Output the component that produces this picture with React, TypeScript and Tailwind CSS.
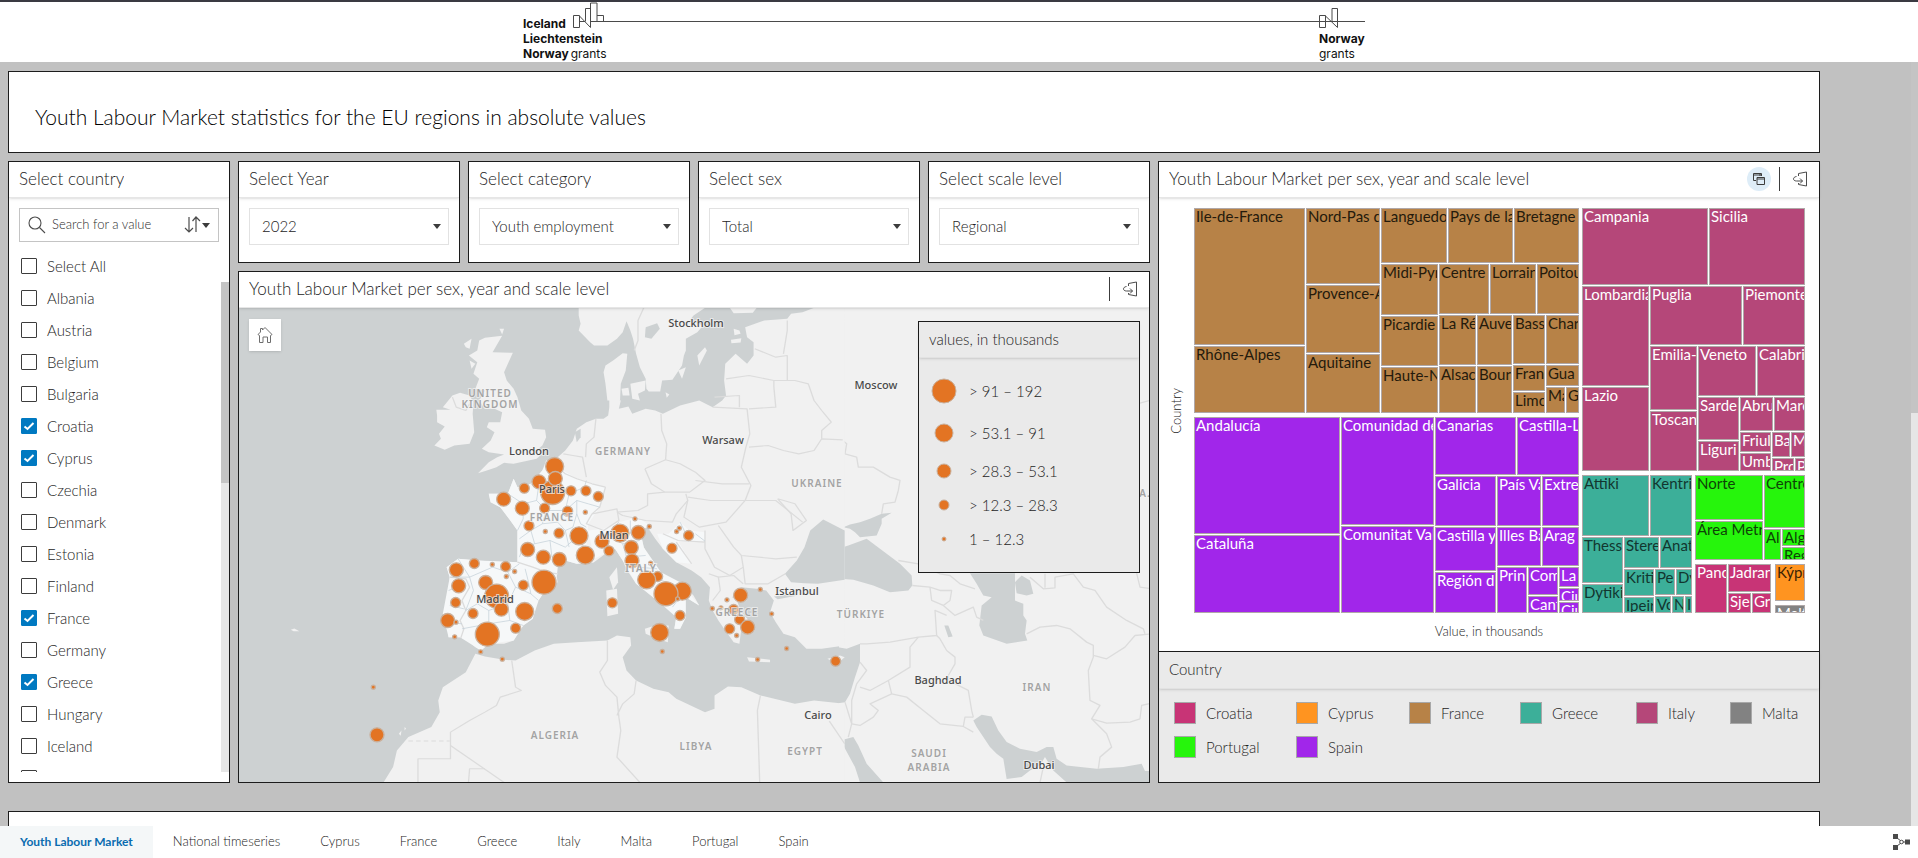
import { useState, type ReactNode } from "react";

type Tile = [name: string, x: number, y: number, w: number, h: number];
interface TileGroup { country: string; fill: string; text: string; tiles: Tile[]; }

const COUNTRIES = ["Albania", "Austria", "Belgium", "Bulgaria", "Croatia", "Cyprus", "Czechia", "Denmark", "Estonia", "Finland", "France", "Germany", "Greece", "Hungary", "Iceland", "Ireland"];
const PRESELECTED = ["Croatia", "Cyprus", "France", "Greece"];
const TABS = ["Youth Labour Market", "National timeseries", "Cyprus", "France", "Greece", "Italy", "Malta", "Portugal", "Spain"];

const FILTERS = [
  { id: "year", title: "Select Year", options: ["2022", "2021", "2020"] },
  { id: "category", title: "Select category", options: ["Youth employment", "Youth unemployment"] },
  { id: "sex", title: "Select sex", options: ["Total", "Females", "Males"] },
  { id: "scale", title: "Select scale level", options: ["Regional", "National"] },
];

const CHART_LEGEND = [
  { name: "Croatia", fill: "#c83476" },
  { name: "Cyprus", fill: "#ff9420" },
  { name: "France", fill: "#b78247" },
  { name: "Greece", fill: "#3caf99" },
  { name: "Italy", fill: "#b54779" },
  { name: "Malta", fill: "#828282" },
  { name: "Portugal", fill: "#26f50c" },
  { name: "Spain", fill: "#a126ea" },
];

// names are cut to what a tile can hold
const TREEMAP: TileGroup[] = [
  {
    country: "France", fill: "#b78247", text: "#241a0c",
    tiles: [
      ["Ile-de-France", 0, 0, 112, 138], ["Rhône-Alpes", 0, 138, 112, 68],
      ["Nord-Pas d", 112, 0, 75, 77], ["Provence-A", 112, 77, 75, 69], ["Aquitaine", 112, 146, 75, 60],
      ["Languedo", 187, 0, 67, 56], ["Pays de la", 254, 0, 66, 56], ["Bretagne", 320, 0, 66, 56],
      ["Midi-Pyr", 187, 56, 58, 52], ["Centre", 245, 56, 51, 51], ["Lorrain", 296, 56, 47, 51], ["Poitou", 343, 56, 43, 51],
      ["Picardie", 187, 108, 58, 51], ["Haute-N", 187, 159, 58, 47],
      ["La Ré", 245, 107, 38, 51], ["Auve", 283, 107, 36, 51], ["Bass", 319, 107, 33, 50], ["Char", 352, 107, 34, 50],
      ["Alsac", 245, 158, 38, 48], ["Bour", 283, 158, 36, 48], ["Fran", 319, 157, 33, 27], ["Limo", 319, 184, 33, 22],
      ["Gua", 352, 157, 34, 22], ["Ma", 352, 179, 20, 27], ["G", 372, 179, 14, 27],
    ],
  },
  {
    country: "Spain", fill: "#a126ea", text: "#ffffff",
    tiles: [
      ["Andalucía", 0, 209, 147, 118], ["Cataluña", 0, 327, 147, 79],
      ["Comunidad de", 147, 209, 94, 109], ["Comunitat Val", 147, 318, 94, 88],
      ["Canarias", 241, 209, 82, 59], ["Castilla-L", 323, 209, 63, 59],
      ["Galicia", 241, 268, 62, 51], ["País Va", 303, 268, 45, 51], ["Extre", 348, 268, 38, 51],
      ["Castilla y", 241, 319, 62, 45], ["Región d", 241, 364, 62, 42],
      ["Illes Ba", 303, 319, 45, 40], ["Arag", 348, 319, 38, 40],
      ["Prin", 303, 359, 31, 47], ["Com", 334, 359, 31, 29], ["Cant", 334, 388, 31, 18],
      ["La", 365, 359, 21, 21], ["Ciu", 365, 380, 21, 14], ["Ciu", 365, 394, 21, 12],
    ],
  },
  {
    country: "Italy", fill: "#b54779", text: "#ffffff",
    tiles: [
      ["Campania", 388, 0, 127, 78], ["Sicilia", 515, 0, 97, 78],
      ["Lombardia", 388, 78, 68, 101], ["Lazio", 388, 179, 68, 85],
      ["Puglia", 456, 78, 93, 60], ["Piemonte", 549, 78, 63, 60],
      ["Emilia-", 456, 138, 48, 65], ["Toscan", 456, 203, 48, 61],
      ["Veneto", 504, 138, 59, 51], ["Calabri", 563, 138, 49, 51],
      ["Sarde", 504, 189, 42, 44], ["Liguri", 504, 233, 42, 31],
      ["Abru", 546, 189, 34, 35], ["Marc", 580, 189, 32, 35],
      ["Friul", 546, 224, 32, 21], ["Umb", 546, 245, 32, 19],
      ["Ba", 578, 224, 19, 26], ["M", 597, 224, 15, 26],
      ["Pro", 578, 250, 23, 14], ["P", 601, 250, 11, 14],
    ],
  },
  {
    country: "Greece", fill: "#3caf99", text: "#12362f",
    tiles: [
      ["Attiki", 388, 267, 68, 62], ["Kentri", 456, 267, 43, 62],
      ["Thess", 388, 329, 42, 47], ["Dytiki", 388, 376, 42, 30],
      ["Stere", 430, 329, 36, 32], ["Anat", 466, 329, 33, 32],
      ["Kriti", 430, 361, 31, 28], ["Pe", 461, 361, 21, 27], ["Dy", 482, 361, 17, 27],
      ["Ipeir", 430, 389, 31, 17], ["Vo", 461, 388, 17, 18], ["N", 478, 388, 13, 18], ["I", 491, 388, 8, 18],
    ],
  },
  {
    country: "Portugal", fill: "#26f50c", text: "#0e4207",
    tiles: [
      ["Norte", 501, 267, 69, 46], ["Área Metr", 501, 313, 69, 40],
      ["Centro", 570, 267, 42, 54], ["Al", 570, 321, 18, 32], ["Alg", 588, 321, 24, 18], ["Reg", 588, 339, 24, 14],
    ],
  },
  {
    country: "Croatia", fill: "#c83476", text: "#ffffff",
    tiles: [["Pano", 501, 356, 33, 50], ["Jadran", 534, 356, 44, 29], ["Sje", 534, 385, 24, 21], ["Gr", 558, 385, 20, 21]],
  },
  { country: "Cyprus", fill: "#ff9420", text: "#3a2204", tiles: [["Kýpr", 581, 356, 31, 38]] },
  { country: "Malta", fill: "#828282", text: "#ffffff", tiles: [["Malt", 581, 397, 31, 9]] },
];

// marker radius per class, smallest class last
const RADII = [12, 9, 7, 5, 2];
const MARKERS: [x: number, y: number, cls: number][] = [
  [464, 138, 1], [417, 184, 2], [458, 216, 0], [466, 174, 2], [373, 203, 3], [513, 211, 3], [558, 211, 3], [595, 228, 3],
  [311, 236, 2], [367, 263, 2], [434, 263, 3], [503, 272, 3], [556, 275, 4], [387, 316, 3], [436, 333, 4], [477, 338, 3],
  [537, 346, 1], [383, 387, 2], [430, 410, 2], [478, 417, 2], [556, 404, 1], [606, 362, 2], [627, 391, 3], [660, 338, 1],
  [715, 336, 2], [705, 295, 4], [748, 318, 4], [694, 381, 2], [696, 421, 2], [838, 323, 4], [830, 333, 4], [866, 345, 3],
  [816, 383, 3], [773, 468, 3], [740, 478, 1], [752, 428, 4], [847, 512, 1], [798, 520, 0], [833, 535, 4], [840, 585, 3],
  [637, 547, 3], [779, 636, 1], [787, 693, 4], [432, 485, 0], [370, 494, 3], [169, 448, 2], [223, 429, 3], [277, 432, 4],
  [317, 438, 3], [344, 453, 4], [319, 468, 4], [176, 496, 2], [257, 486, 2], [290, 527, 0], [304, 566, 2], [374, 573, 1],
  [347, 623, 3], [472, 564, 3], [219, 579, 3], [167, 546, 3], [143, 600, 2], [168, 605, 4], [164, 649, 4], [262, 641, 0],
  [242, 694, 4], [307, 716, 4], [1022, 524, 2], [1081, 507, 4], [981, 538, 4], [937, 564, 4], [963, 562, 4], [1001, 567, 3],
  [1019, 597, 3], [1043, 620, 2], [989, 625, 3], [1010, 645, 4], [1115, 580, 4], [1160, 684, 4], [1073, 717, 4], [1307, 722, 3],
  [-80, 800, 4], [-69, 943, 2],
];

const CITY_LABELS: [string, number, number][] = [
  ["Stockholm", 696, 326], ["Moscow", 876, 388], ["London", 529, 454], ["Warsaw", 723, 443], ["Paris", 552, 492], ["Milan", 614, 538],
  ["Madrid", 495, 602], ["Istanbul", 797, 594], ["Baghdad", 938, 683], ["Dubai", 1039, 768], ["Cairo", 818, 718],
];
const COUNTRY_LABELS: [string, number, number][] = [
  ["UNITED", 490, 396], ["KINGDOM", 490, 407], ["GERMANY", 623, 454], ["UKRAINE", 817, 486], ["FRANCE", 552, 520], ["ITALY", 641, 571],
  ["GREECE", 737, 615], ["TÜRKIYE", 861, 617], ["IRAN", 1037, 690], ["ALGERIA", 555, 738], ["LIBYA", 696, 749], ["EGYPT", 805, 754],
  ["SAUDI", 929, 756], ["ARABIA", 929, 770], ["A.", 1145, 496],
];

const MAP_LEGEND = [
  { label: "> 91 – 192", r: 12, row: "h-[42px]" },
  { label: "> 53.1 – 91", r: 9, row: "h-[42px]" },
  { label: "> 28.3 – 53.1", r: 7, row: "h-[34px]" },
  { label: "> 12.3 – 28.3", r: 5, row: "h-[34px]" },
  { label: "1 – 12.3", r: 2, row: "h-[34px]" },
];

// west sheet of the basemap
const WEST_LAND = [
  "640,112 685,106 660,155 713,157 690,215 697,240 715,265 725,290 735,330 755,355 765,385 797,388 800,410 790,435 780,445 790,460 775,475 745,482 715,490 690,487 670,500 645,510 622,518 650,485 672,470 690,462 650,455 632,445 655,420 665,395 645,380 650,365 680,365 685,335 665,325 640,325 625,300 640,270 615,265 625,235 610,220 620,185 598,165 620,150 625,120",
  "585,130 605,115 600,145 590,140", "678,85 690,85 685,102", "600,180 615,190 605,205",
  "513,328 550,328 530,320 555,285 575,277 600,285 610,305 608,340 612,395 600,430 560,435 535,448 508,435 525,415 520,400 535,378 515,365 515,345",
  "885,22 885,45 890,70 885,90 915,125 925,135 960,135 985,115 1000,95 1010,62 1020,90 1027,115 1035,160 1045,200 1060,235 1062,265 1068,273 1098,273 1103,240 1130,238 1155,195 1160,165 1165,150 1165,115 1195,95 1210,75 1175,60 1185,45 1215,22",
  "1195,165 1215,140 1220,150 1200,195", "1145,210 1165,200 1155,235", "1290,85 1305,90 1308,100 1292,104", "1283,118 1310,113 1308,126 1284,128", "1280,22 1350,22 1340,37 1290,38",
  "955,195 975,180 1000,158 1012,160 1008,210 995,250 993,300 960,300 955,250 950,215",
  "1020,250 1060,240 1058,270 1040,280 1045,300 1025,295", "997,265 1015,262 1018,285 1000,285", "1112,275 1122,282 1115,292",
  "965,290 995,300 990,325 1015,318 1025,340 1060,325 1085,330 1105,340 1150,315 1200,300 1235,320 1260,300 1270,285 1265,240 1268,190 1295,160 1325,190 1342,165 1342,125 1325,110 1320,80 1370,60 1430,55 1440,40 1470,35 1500,22 1580,22 1580,1035 1520,1045 1480,1045 1450,1010 1420,1000 1400,965 1385,935 1395,900 1385,885 1375,870 1350,865 1310,860 1300,880 1285,890 1325,900 1300,905 1310,935 1330,960 1345,990 1335,1000 1320,990 1310,985 1305,1030 1290,1025 1265,985 1250,960 1235,930 1225,900 1228,860 1205,830 1180,810 1140,785 1105,745 1085,715 1065,680 1045,690 1050,715 1055,740 1075,790 1100,815 1125,850 1150,845 1160,855 1185,885 1200,915 1190,908 1165,890 1155,905 1160,925 1165,950 1150,985 1135,985 1140,950 1130,920 1100,910 1060,870 1035,850 1015,815 1000,780 980,745 960,755 925,785 880,790 850,780 830,795 828,830 830,845 800,865 780,900 765,935 765,955 740,975 715,1020 690,1030 650,1030 630,1050 615,1040 595,1020 575,1010 545,1010 545,980 535,965 530,940 545,910 545,870 548,830 540,800 570,775 620,780 690,785 725,785 725,740 725,690 700,650 680,620 655,605 650,580 700,580 715,535 725,560 760,550 790,510 800,480 830,470 850,450 870,420 880,385 905,365 930,355 950,355 962,345 965,320",
  "1058,985 1085,975 1120,975 1118,1025 1090,1015 1060,1000", "957,870 985,865 988,940 960,947", "965,830 985,800 988,845 975,868", "1325,1070 1385,1078 1385,1085 1330,1083",
  "1535,1075 1568,1065 1580,1070 1560,1090", "815,925 845,918 840,930", "133,988 142,984 155,992 140,992", "415,1300 422,1290 420,1306", "430,1280 434,1284 430,1290",
  "375,1446 400,1400 410,1350 440,1310 500,1280 522,1235 518,1200 530,1160 590,1115 615,1060 640,1068 690,1078 720,1080 770,1050 820,1030 880,1025 960,1020 985,1005 1020,1010 1022,1035 1000,1070 1010,1110 1035,1140 1080,1165 1120,1175 1140,1195 1215,1235 1240,1225 1240,1185 1275,1158 1310,1160 1360,1185 1450,1210 1500,1200 1580,1210 1580,1446",
];
const WEST_WATER = [
  "1524,657 1580,690 1580,838 1510,850 1475,848 1440,845 1424,820 1455,780 1475,740 1490,690",
  "1060,80 1090,68 1097,85 1075,115 1058,110", "1395,888 1450,880 1455,886 1405,896", "875,395 890,385 890,410 880,425",
];
const SELECTED_LAND = [
  "725,785 725,690 700,650 680,620 655,605 650,580 700,580 715,535 725,560 760,550 790,510 800,490 830,500 880,535 955,560 940,620 910,670 905,740 925,785 880,790 850,780 830,795 828,820",
  "725,785 830,820 800,865 780,900 765,955 740,975 715,1020 650,1030 630,1050 575,1010 545,1010 530,940 548,830 540,800 570,775 620,780",
  "910,690 950,685 990,665 1040,650 1070,675 1045,690 1055,740 1100,815 1150,845 1200,915 1165,890 1165,950 1150,985 1135,985 1140,950 1100,910 1035,850 1000,780 980,745 925,775",
  "1090,700 1120,700 1150,665 1175,690 1215,695 1215,722 1145,722 1180,790 1140,785 1105,745",
];
const REGION_LINES = [
  "700,580 740,610 775,600 780,560 760,550", "740,610 740,655 725,690", "775,600 800,630 790,670 760,690 730,715", "800,630 850,630 860,580 830,560 835,520 800,490", "850,630 880,600 910,610 940,620",
  "860,580 900,560 905,540", "880,600 880,640 890,670 905,680", "790,670 830,665 850,690 870,680 880,640", "760,690 770,730 740,740 730,770", "770,730 810,720 850,740 870,720 905,740", "810,720 815,770 850,780", "850,690 860,740",
  "570,775 600,830 550,830", "600,830 660,800 700,815 730,790", "600,830 610,870 590,930 620,910 650,930 700,910 720,860 700,815", "720,860 760,880 780,900", "700,910 705,960 650,970 580,985", "705,960 740,975", "650,970 650,930", "745,805 755,850 760,880",
  "940,740 960,700 990,665", "960,700 1000,730 1045,720", "1000,730 1010,770 1060,765", "1010,770 1040,800 1090,805", "1060,850 1080,830 1125,850", "1100,905 1110,870 1125,850", "1020,660 1020,700", "1130,920 1150,890 1165,890",
  "545,870 590,850", "548,915 585,925", "540,965 580,970", "1165,700 1150,665", "1190,700 1215,722",
];
const WEST_BORDERS = [
  "555,290 565,320 590,330 600,310", "725,785 765,800 800,815 830,820", "548,830 590,835 600,860 580,900 590,930 575,960 585,985 577,1012",
  "800,490 830,500 850,520 880,535 920,550 955,560", "955,560 940,620 920,640", "845,460 870,465 895,470 900,500 905,530", "930,355 925,410 905,430 903,470", "1100,340 1102,390 1115,430 1112,478",
  "1058,505 1112,478 1150,490 1190,515 1215,540 1175,575 1110,575 1075,550 1058,505", "1235,320 1325,325 1332,400 1322,440 1310,500 1335,555 1320,600", "1190,540 1260,550 1330,550", "1320,600 1230,600 1170,590",
  "985,635 1040,630 1065,615 1065,580 1110,575", "1165,580 1170,600 1140,640 1130,665 1060,660 1000,645 985,635", "920,640 985,625 990,660 950,690 905,670 920,640", "1170,600 1160,650 1200,680 1270,665 1320,600 1400,600 1470,665",
  "1250,675 1290,740 1310,765 1400,775 1455,770", "1405,595 1440,640 1445,690 1480,660 1450,610 1405,595", "1215,690 1215,745 1240,800 1280,825 1315,800 1310,765", "1315,800 1320,850 1380,850 1425,820",
  "1225,820 1250,830 1255,870 1235,900", "1250,830 1290,825 1315,850", "1105,700 1145,720 1215,725", "1140,725 1180,790",
  "1330,440 1380,435 1420,450 1460,460 1500,450 1520,415 1575,418", "1395,260 1400,320 1330,325", "1270,235 1330,225 1395,240 1395,260", "1345,145 1400,170 1430,165 1430,240", "1430,60 1430,90 1420,160",
  "1395,240 1450,240 1485,250 1500,300 1520,330 1545,365 1520,390 1520,415", "1240,290 1305,285 1305,320", "1055,22 1040,60 1040,120 1030,150",
  "710,1080 720,1160 735,1170 680,1190 670,1215 640,1235 600,1260 550,1295 550,1375 465,1375 465,1446", "550,1335 690,1446", "597,1446 600,1405 640,1405",
  "960,1020 960,1080 940,1115 955,1155 985,1190 990,1250 995,1290 985,1370 1045,1446", "1035,1140 1030,1180 1000,1210 985,1245", "1360,1185 1352,1230 1358,1446", "1540,1262 1580,1330",
];

// east sheet: solid land with the seas cut out of it
const EAST_WATER = [
  "10,680 30,672 60,665 90,655 125,640 155,637 125,655 125,670 110,705 60,710 45,695 30,685",
  "-6,745 25,735 80,715 120,745 180,790 215,825 217,855 205,870 150,875 100,855 40,838 0,835 -6,836",
  "-6,1040 20,1045 60,1030 60,1085 45,1130 30,1180 15,1205 -6,1208",
  "0,1320 40,1310 55,1335 80,1390 130,1446 60,1446 45,1400 10,1335",
  "390,818 525,818 525,900 550,910 550,945 560,960 555,1000 562,1020 500,1030 430,1005 418,975 425,915 455,890 430,885 410,850",
  "525,845 545,825 570,840 580,880 560,885 530,878", "313,975 325,975 338,1008 325,1010",
  "400,1260 425,1243 455,1248 475,1290 500,1325 540,1345 590,1355 620,1340 640,1340 650,1375 680,1395 770,1405 850,1400 905,1390 915,1412 935,1412 935,1446 680,1446 640,1410 615,1370 600,1395 570,1410 545,1430 500,1436 490,1375 470,1360 450,1340 430,1310 410,1280",
];
const EAST_BORDERS = [
  "-4,410 20,430 15,460 50,470 55,500 100,500 150,530 180,540 175,570 165,605 130,610 125,640", "900,308 935,298", "175,780 235,790 300,820 330,825 360,850 405,865", "217,855 270,860 300,870 335,870 330,900 310,915 345,945 400,920 410,950 430,960",
  "270,860 275,900 310,915", "60,1030 80,1030 150,1025 235,1010 290,1005 285,930 320,945", "290,1005 300,1015 320,1050 345,1070 345,1090 325,1125 325,1140 385,1170 390,1200 395,1230 400,1250",
  "235,1010 210,1040 210,1100 145,1140 90,1170 60,1160", "145,1140 155,1180 200,1190 250,1230 300,1270 370,1278 400,1295", "155,1180 90,1210 115,1230 100,1250 60,1275 35,1270", "60,1085 80,1110 50,1150 35,1200 35,1270 25,1310", "15,1205 35,1270",
  "560,1000 600,980 650,975 690,985 740,1025 760,1035 760,1070 745,1110 750,1200 780,1215 755,1255 800,1300 815,1340 780,1370 775,1405", "760,1065 800,1075 855,1040 885,1005 935,1000", "755,1255 800,1268 870,1265 900,1255 905,1215 935,1208",
  "570,830 610,865 645,862 645,830 700,820 730,860 765,870 800,920 860,960 910,985 915,1000", "615,820 615,862", "890,818 900,860 935,865", "370,1278 375,1250 400,1250", "610,1400 600,1446",
];

function ShareIcon() {
  return (
    <svg width="16" height="16" viewBox="0 0 16 16" fill="none" stroke="#4c4c4c" strokeWidth="1" aria-hidden="true">
      <path d="M6.500 5V2.500L14.500 1V15L6.500 13.500V12" />
      <path d="M4.500 5.500C.5 6 .5 10 4.500 10H10.500M8 7.500L10.500 10L8 12.500" />
    </svg>
  );
}

function Caret() {
  return <svg width="8" height="5" viewBox="0 0 8 5" fill="#3c3c3c" aria-hidden="true"><path d="M0 0H8L4 5Z" /></svg>;
}

function Panel({ title, tools, className = "", children }: { title: string; tools?: ReactNode; className?: string; children?: ReactNode }) {
  return (
    <section className={`flex min-w-0 flex-col border border-[#1c1c1c] bg-white ${className}`}>
      <div className="z-10 flex h-9 shrink-0 items-center justify-between border-b border-[#e6e6e6] pr-[11px] pb-[2px] pl-[10px] shadow-sm">
        <h2 className="truncate text-[17px] leading-6">{title}</h2>
        {tools}
      </div>
      {children}
    </section>
  );
}

function GrantsLogo() {
  return (
    <svg viewBox="0 2 842 60" className="ml-[27%] h-[60px] w-[842px] translate-x-[5px]" role="img" aria-label="Iceland Liechtenstein Norway grants">
      <g fill="none" stroke="#4a4a4a" strokeWidth="1">
        <path d="M50.500 15.500H56.500V27.500H50.500ZM56.500 16L67.500 27.500V8.500H62.500V21.500M67.500 21.500V3H74V21.500M74 15.500H80.500V21.500M56.500 21.500H62M67.500 21.500H842" />
        <path d="M796.500 15.500H802.500V27.500H796.500ZM802.500 16L814.500 27.500V8.500H809V21.500M802.500 21.500H809" />
      </g>
      <g className="font-[Inter] text-[12px] font-bold" fill="#111111">
        <text x="0" y="28">Iceland</text>
        <text x="0" y="43">Liechtenstein</text>
        <text x="0" y="58">Norway<tspan dx="2" className="font-normal">grants</tspan></text>
        <text x="796" y="43">Norway</text>
        <text x="796" y="58" className="font-normal">grants</text>
      </g>
    </svg>
  );
}

function CountryFilter() {
  const [selected, setSelected] = useState<string[]>(PRESELECTED);
  const toggle = (name: string) => setSelected((prev) => (prev.includes(name) ? prev.filter((n) => n !== name) : [...prev, name]));
  const allSelected = selected.length === COUNTRIES.length;

  return (
    <Panel title="Select country" className="row-span-2">
      <div className="mx-[10px] mt-[10px] flex h-[34px] shrink-0 items-center border border-[#c4c4c4] px-2">
        <svg width="18" height="18" viewBox="0 0 18 18" fill="none" stroke="#4c4c4c" strokeWidth="1.100" aria-hidden="true"><circle cx="7" cy="7" r="6" /><path d="M11.500 11.500L17 17" /></svg>
        <input type="text" aria-label="Search for a value" placeholder="Search for a value" className="ml-[6px] min-w-0 flex-1 bg-transparent text-[13px] outline-none placeholder:text-[#2c2c2c]" />
        <button type="button" aria-label="Sort values" className="flex items-center gap-px">
          <svg width="17" height="18" viewBox="0 0 17 18" fill="none" stroke="#4c4c4c" strokeWidth="1.200" aria-hidden="true"><path d="M5 1V16M1 12L5 16L9 12M12 16V1M8.500 5L12 1L16 5" /></svg>
          <Caret />
        </button>
      </div>
      <div className="mt-2 pl-3">
        <CheckRow label="Select All" checked={allSelected} onChange={() => setSelected(allSelected ? [] : COUNTRIES)} />
      </div>
      <div className="flex h-0 grow overflow-hidden">
        <ul className="flex-1 pl-3">
          {COUNTRIES.map((name) => <li key={name}><CheckRow label={name} checked={selected.includes(name)} onChange={() => toggle(name)} /></li>)}
        </ul>
        <div className="w-2 bg-[#e6e6e6]"><div className="h-[41%] bg-[#c4c4c4]" /></div>
      </div>
      <div className="h-[10px] shrink-0" />
    </Panel>
  );
}

function CheckRow({ label, checked, onChange }: { label: string; checked: boolean; onChange: () => void }) {
  return (
    <label className="flex h-8 items-center gap-[10px] text-[15px]">
      <span className="relative flex">
        <input type="checkbox" checked={checked} onChange={onChange} className="h-4 w-4 appearance-none rounded-[1px] border border-[#3c3c3c] bg-white checked:border-[#0079c1] checked:bg-[#0079c1]" />
        {checked && <svg viewBox="0 0 16 16" className="pointer-events-none absolute inset-0" fill="none" stroke="#ffffff" strokeWidth="2" aria-hidden="true"><path d="M3.500 8.500L6.500 11L12.500 5" /></svg>}
      </span>
      {label}
    </label>
  );
}

function FilterPanel({ id, title, options }: { id: string; title: string; options: string[] }) {
  return (
    <Panel title={title} className="h-[102px]">
      <div className="relative mx-[10px] mt-[10px]">
        <select id={id} aria-label={title} className="h-[37px] w-full appearance-none border border-[#e2e2e2] bg-white pl-3 text-[15px] outline-none">
          {options.map((option) => <option key={option}>{option}</option>)}
        </select>
        <span className="pointer-events-none absolute top-4 right-2"><Caret /></span>
      </div>
    </Panel>
  );
}

function RegionMap() {
  return (
    <div className="relative h-[474px] overflow-hidden bg-[#cdd1d2]">
      <svg viewBox="239 307 910 475" preserveAspectRatio="xMidYMid slice" className="h-full w-full" role="img" aria-label="Map of youth employment by region">
        <g transform="translate(840 300) scale(.3333)" fill="#cdd1d2" strokeLinejoin="round">
          <rect x="-3" y="20" width="940" height="1430" fill="#f1f1f1" />
          {EAST_WATER.map((p) => <polygon key={p} points={p} />)}
          <g fill="none" stroke="#dcdcdc" strokeWidth="4">{EAST_BORDERS.map((p) => <polyline key={p} points={p} />)}</g>
        </g>
        <g transform="translate(240 300) scale(.3827 .3333)" strokeLinejoin="round">
          <g fill="#f1f1f1">{WEST_LAND.map((p) => <polygon key={p} points={p} />)}</g>
          <g fill="#cdd1d2">{WEST_WATER.map((p) => <polygon key={p} points={p} />)}</g>
          <g fill="#f6f8f9">{SELECTED_LAND.map((p) => <polygon key={p} points={p} />)}</g>
          <g fill="none" stroke="#dcdcdc" strokeWidth="3.500">{WEST_BORDERS.map((p) => <polyline key={p} points={p} />)}</g>
          <g fill="none" stroke="#c3cfd8" strokeWidth="2">{REGION_LINES.map((p) => <polyline key={p} points={p} />)}</g>
          <path d="M440 1322H548" stroke="#dcdcdc" strokeWidth="3" strokeDasharray="12 8" />
        </g>
        <g transform="translate(400 420) scale(.3333)" fill="#e37423" stroke="#c9b09c" strokeWidth="4">
          {MARKERS.map(([x, y, cls]) => <circle key={`${x},${y}`} cx={x} cy={y} r={RADII[cls] * 3} />)}
        </g>
        <g textAnchor="middle" stroke="#f4f4f4" strokeWidth="2" strokeOpacity="0.700" paintOrder="stroke" className="font-['Noto_Sans']">
          <g className="text-[10px] font-semibold tracking-widest" fill="#a3a3a3">{COUNTRY_LABELS.map(([name, x, y]) => <text key={name} x={x} y={y}>{name}</text>)}</g>
          <g className="text-[11px] font-medium" fill="#4a4a4a">{CITY_LABELS.map(([name, x, y]) => <text key={name} x={x} y={y}>{name}</text>)}</g>
        </g>
      </svg>
      <button type="button" aria-label="Default extent" className="absolute top-[11px] left-[10px] flex h-8 w-8 items-center justify-center bg-white shadow">
        <svg width="16" height="18" viewBox="0 0 16 18" fill="none" stroke="#6e6e6e" strokeWidth="1" aria-hidden="true"><path d="M1 8.500L3.500 6V2.500H5.500V4L8 1.500L15 8.500L13.500 9.500V16.500H10.500V11H6V16.500H2.500V9.500Z" /></svg>
      </button>
      <div className="absolute top-[13px] right-[9px] h-[252px] w-[222px] border border-[#1c1c1c] bg-[#eaeaea]">
        <h3 className="h-9 border-b border-[#e2e2e2] pl-[10px] text-[15px] leading-[34px] shadow-sm">values, in thousands</h3>
        <ul className="pt-[12px]">
          {MAP_LEGEND.map(({ label, r, row }) => (
            <li key={label} className={`flex items-center gap-3 pl-3 text-[15px] ${row}`}>
              <svg width="26" height="26" viewBox="0 0 26 26" aria-hidden="true"><circle cx="13" cy="13" r={r} fill="#e37423" stroke="#c9b09c" /></svg>
              {label}
            </li>
          ))}
        </ul>
      </div>
    </div>
  );
}

function Treemap() {
  return (
    <svg viewBox="0 0 612 406" preserveAspectRatio="xMidYMin meet" className="h-full min-w-0 flex-1" role="img" aria-label="Treemap of regions by country">
      {TREEMAP.map(({ country, fill, text, tiles }) => (
        <g key={country}>
          {tiles.map(([name, x, y, w, h]) => (
            <svg key={`${x},${y}`} x={x} y={y} width={w} height={h}>
              <rect x="0.500" y="0.500" width={w - 2} height={h - 2} fill={fill} stroke="#b0a8a8" />
              <svg width={w - 2} height={h - 2}><text x="2" y="14" fill={text} className="text-[15px] font-normal">{name}</text></svg>
            </svg>
          ))}
        </g>
      ))}
    </svg>
  );
}

function ChartPanel() {
  const tools = (
    <div className="flex h-6 items-center">
      <button type="button" aria-label="Selection" className="mr-2 flex h-6 w-6 items-center justify-center rounded-full bg-[#deedf8]">
        <svg width="12" height="12" viewBox="0 0 12 12" fill="none" stroke="#3c3c3c" aria-hidden="true"><path d="M3 7.500H.500V.500H8.500V3M.500 2H8.500M4 4.500H11.500V11.500H4ZM4 6H11.500M7 1V3" /></svg>
      </button>
      <span className="mr-3 h-6 border-l border-[#3c3c3c]" />
      <button type="button" aria-label="Export"><ShareIcon /></button>
    </div>
  );
  return (
    <Panel title="Youth Labour Market per sex, year and scale level" tools={tools} className="row-span-2">
      <div className="flex h-0 grow pt-[10px] pr-[13px]">
        <div className="flex w-[35px] shrink-0 items-center justify-center text-[13px]"><span className="rotate-180 [writing-mode:vertical-rl]">Country</span></div>
        <Treemap />
      </div>
      <p className="pt-2 pb-[11px] text-center text-[13px] leading-[18px]">Value, in thousands</p>
      <div className="h-[131px] border-t border-[#1c1c1c] bg-[#eaeaea]">
        <h3 className="h-[37px] border-b border-[#e2e2e2] pl-[10px] text-[15px] leading-[34px] shadow-sm">Country</h3>
        <ul className="grid grid-cols-[122px_113px_111px_116px_94px_1fr] gap-y-3 pt-[13px] pl-[15px]">
          {CHART_LEGEND.map(({ name, fill }) => (
            <li key={name} className="flex items-center gap-[10px] text-[15px] leading-[22px]">
              <svg width="22" height="22" aria-hidden="true"><rect x="0.500" y="0.500" width="21" height="21" fill={fill} stroke="#a8a8a8" /></svg>
              {name}
            </li>
          ))}
        </ul>
      </div>
    </Panel>
  );
}

export default function App() {
  const [tab, setTab] = useState(TABS[0]);
  const mapTools = (
    <div className="flex items-center">
      <span className="mr-3 h-6 border-l border-[#3c3c3c]" />
      <button type="button" aria-label="Export"><ShareIcon /></button>
    </div>
  );

  return (
    <div className="flex h-screen flex-col overflow-hidden bg-white font-[Lato,sans-serif] font-light text-[#242424]">
      <header className="h-[62px] shrink-0 border-t-2 border-[#3a3a42]"><GrantsLogo /></header>
      <div className="flex min-h-0 flex-1 bg-[#c1c1c1]">
        <main className="min-w-0 flex-1 overflow-hidden pt-[9px] pr-[91px] pl-2">
          <div className="flex h-[82px] items-center border border-[#1c1c1c] bg-white px-[26px] pt-[10px]">
            <h1 className="text-[21px] text-black">Youth Labour Market statistics for the EU regions in absolute values</h1>
          </div>
          <div className="mt-2 grid grid-cols-[222fr_222fr_222fr_222fr_222fr_662fr] gap-2">
            <CountryFilter />
            {FILTERS.map((filter) => <FilterPanel key={filter.id} {...filter} />)}
            <ChartPanel />
            <Panel title="Youth Labour Market per sex, year and scale level" tools={mapTools} className="col-span-4 col-start-2 row-start-2"><RegionMap /></Panel>
          </div>
          <div className="mt-7 h-24 border border-[#1c1c1c] bg-white" />
        </main>
        <div className="w-[7px] bg-[#e6e6e6]"><div className="h-[46%] bg-[#c4c4c4]" /></div>
      </div>
      <nav className="flex h-8 shrink-0 items-stretch text-[13px]">
        {TABS.map((name) => (
          <button key={name} type="button" onClick={() => setTab(name)} className={`px-5 ${tab === name ? "bg-[#f4f7f8] text-xs font-bold text-[#0a6cb0]" : ""}`}>{name}</button>
        ))}
        <button type="button" aria-label="Layout" className="mr-2 ml-auto">
          <svg width="17" height="16" viewBox="0 0 17 16" aria-hidden="true">
            <path d="M0 0H5V5H0ZM0 11H5V16H0ZM12 5.500H17V10.500H12Z" fill="#4a4a4a" />
            <path d="M4 4L8 7M4 12L8 9M10 8H12" fill="none" stroke="#4a4a4a" />
            <circle cx="8.500" cy="8" r="1.800" fill="#ffffff" stroke="#4a4a4a" />
          </svg>
        </button>
      </nav>
    </div>
  );
}
